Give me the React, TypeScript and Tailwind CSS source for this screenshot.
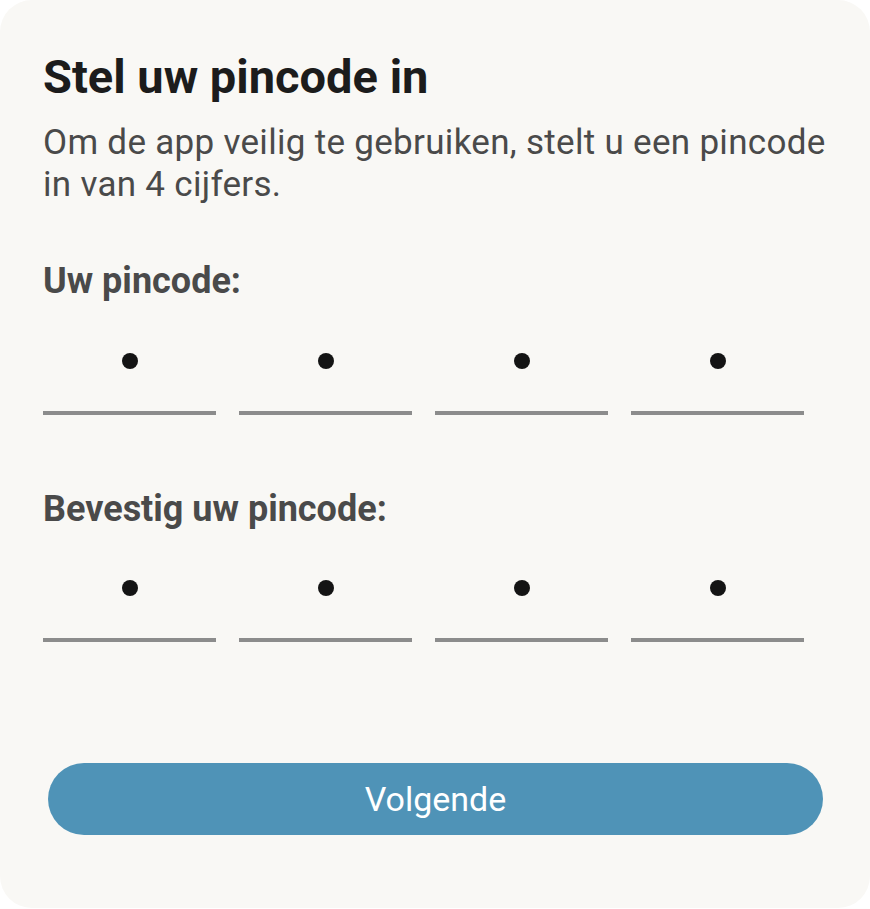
import React from 'react';

const PinRow: React.FC<{ filled: number }> = ({ filled }) => (
  <div className="flex gap-[23px]">
    {[0, 1, 2, 3].map((i) => (
      <div key={i} className="flex w-[173px] flex-col items-center">
        <div className="h-[16px] w-[16px]">
          {i < filled && <span className="block h-[16px] w-[16px] rounded-full bg-[#141414]" />}
        </div>
        <div className="mt-[42px] h-[4px] w-full bg-[#8c8c8c]" />
      </div>
    ))}
  </div>
);

export default function App() {
  return (
    <div className="h-[909px] w-[870px] bg-white font-['Roboto',sans-serif]">
      <div className="flex h-[908px] flex-col rounded-[32px] bg-[#f9f8f5] pl-[43px] pr-[30px] pt-[49px]">
        <h1 className="text-[47px] font-bold leading-[56px] text-[#1c1c1c]">Stel uw pincode in</h1>
        <p className="mt-[17px] text-[35px] leading-[42px] tracking-[0.3px] text-[#4a4a4a]">
          Om de app veilig te gebruiken, stelt u een pincode in van 4 cijfers.
        </p>

        <h2 className="mt-[53px] text-[36px] font-bold leading-[44px] text-[#4a4a4a]">Uw pincode:</h2>
        <div className="mt-[50px]">
          <PinRow filled={4} />
        </div>

        <h2 className="mt-[72px] text-[36px] font-bold leading-[44px] text-[#4a4a4a]">Bevestig uw pincode:</h2>
        <div className="mt-[49px]">
          <PinRow filled={4} />
        </div>

        <button className="ml-[5px] mt-[121px] h-[72px] w-[775px] rounded-full bg-[#4f93b7] text-[34px] text-white">
          Volgende
        </button>
      </div>
    </div>
  );
}
